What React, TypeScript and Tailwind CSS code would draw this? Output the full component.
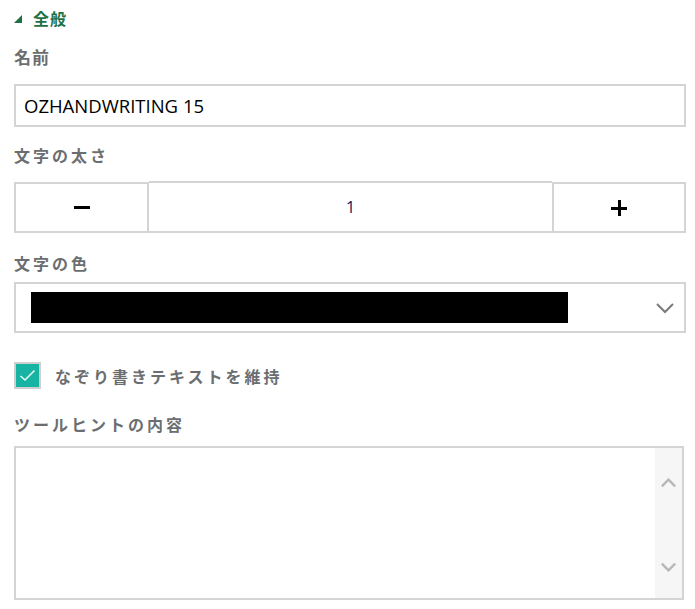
const jp = { fontFamily: '"Noto Sans CJK JP", "Noto Sans", sans-serif' };
const latin = { fontFamily: '"Open Sans", "Noto Sans", "Noto Sans CJK JP", sans-serif' };

function Label({ text, wide }: { text: string; wide?: boolean }) {
  return (
    <div
      className={`h-[24px] flex items-center font-bold text-[#6b6e70] ${wide ? "text-[16px] tracking-[3px]" : "text-[17px] tracking-[1px]"}`}
      style={jp}
    >
      {text}
    </div>
  );
}

function Chevron({ up, color, className, width = 2 }: { up?: boolean; color: string; className?: string; width?: number }) {
  return (
    <svg width="20" height="12" viewBox="0 0 20 12" className={className}>
      <path
        d={up ? "M2 10 L10 2 L18 10" : "M2 2 L10 10 L18 2"}
        fill="none"
        stroke={color}
        strokeWidth={width}
      />
    </svg>
  );
}

export default function App() {
  return (
    <div className="w-[695px] h-[609px] bg-white pl-[14px] pr-[9px] overflow-hidden">
      <div className="h-[36px] flex items-center">
        <svg width="8" height="8" viewBox="0 0 8 8" className="mt-[1px]">
          <polygon points="8,0 8,8 0,8" fill="#1e7145" />
        </svg>
        <span className="ml-[11px] text-[16px] font-bold text-[#1e7145] tracking-[1px]" style={jp}>
          全般
        </span>
      </div>

      <div className="mt-[9px]">
        <Label text="名前" />
      </div>
      <div className="mt-[15px] h-[43px] border-2 border-[#d4d4d4] flex items-center px-[8px]">
        <span className="text-[18.5px] text-black" style={latin}>
          OZHANDWRITING 15
        </span>
      </div>

      <div className="mt-[16px]">
        <Label text="文字の太さ" wide />
      </div>
      <div className="mt-[14px] h-[52px] flex">
        <div className="w-[135px] h-[51px] mt-[1px] border-2 border-[#d4d4d4] flex items-center justify-center">
          <span className="block w-[16px] h-[3px] bg-black" />
        </div>
        <div
          className="flex-1 h-[52px] border-y-2 border-[#d4d4d4] flex items-center justify-center text-[16px] text-[#14145a]"
          style={latin}
        >
          1
        </div>
        <div className="w-[134px] h-[51px] mt-[1px] border-2 border-[#d4d4d4] flex items-center justify-center">
          <span className="relative block w-[16px] h-[16px]">
            <span className="absolute left-0 top-[7px] w-[16px] h-[3px] bg-black" />
            <span className="absolute left-[7px] top-0 w-[3px] h-[16px] bg-black" />
          </span>
        </div>
      </div>

      <div className="mt-[18px]">
        <Label text="文字の色" wide />
      </div>
      <div className="mt-[7px] h-[51px] border-2 border-[#d4d4d4] flex items-center pl-[15px] pr-[9px]">
        <div className="w-[537px] h-[31px] bg-black" />
        <div className="flex-1" />
        <Chevron color="#7a7a7a" />
      </div>

      <div className="mt-[29px] h-[27px] flex items-center">
        <div className="w-[27px] h-[27px] border-2 border-[#cfcfcf] bg-[#17b3a3] flex items-center justify-center">
          <svg width="17" height="13" viewBox="0 0 17 13">
            <path d="M1.5 7 L6 11 L15.5 1.5" fill="none" stroke="#e6f7f5" strokeWidth="1.6" />
          </svg>
        </div>
        <span className="ml-[14px] text-[16px] font-bold text-[#6b6e70] tracking-[3px]" style={jp}>
          なぞり書きテキストを維持
        </span>
      </div>

      <div className="mt-[23px]">
        <Label text="ツールヒントの内容" wide />
      </div>
      <div className="mt-[10px] h-[154px] w-[670px] border-2 border-[#d4d4d4] flex">
        <div className="flex-1" />
        <div className="w-[27px] bg-[#f6f6f6] flex flex-col items-center justify-between pt-[30px] pb-[26px]">
          <Chevron up color="#b8b8b8" width={3} className="w-[17px] h-[10px]" />
          <Chevron color="#b8b8b8" width={3} className="w-[17px] h-[10px]" />
        </div>
      </div>
    </div>
  );
}
